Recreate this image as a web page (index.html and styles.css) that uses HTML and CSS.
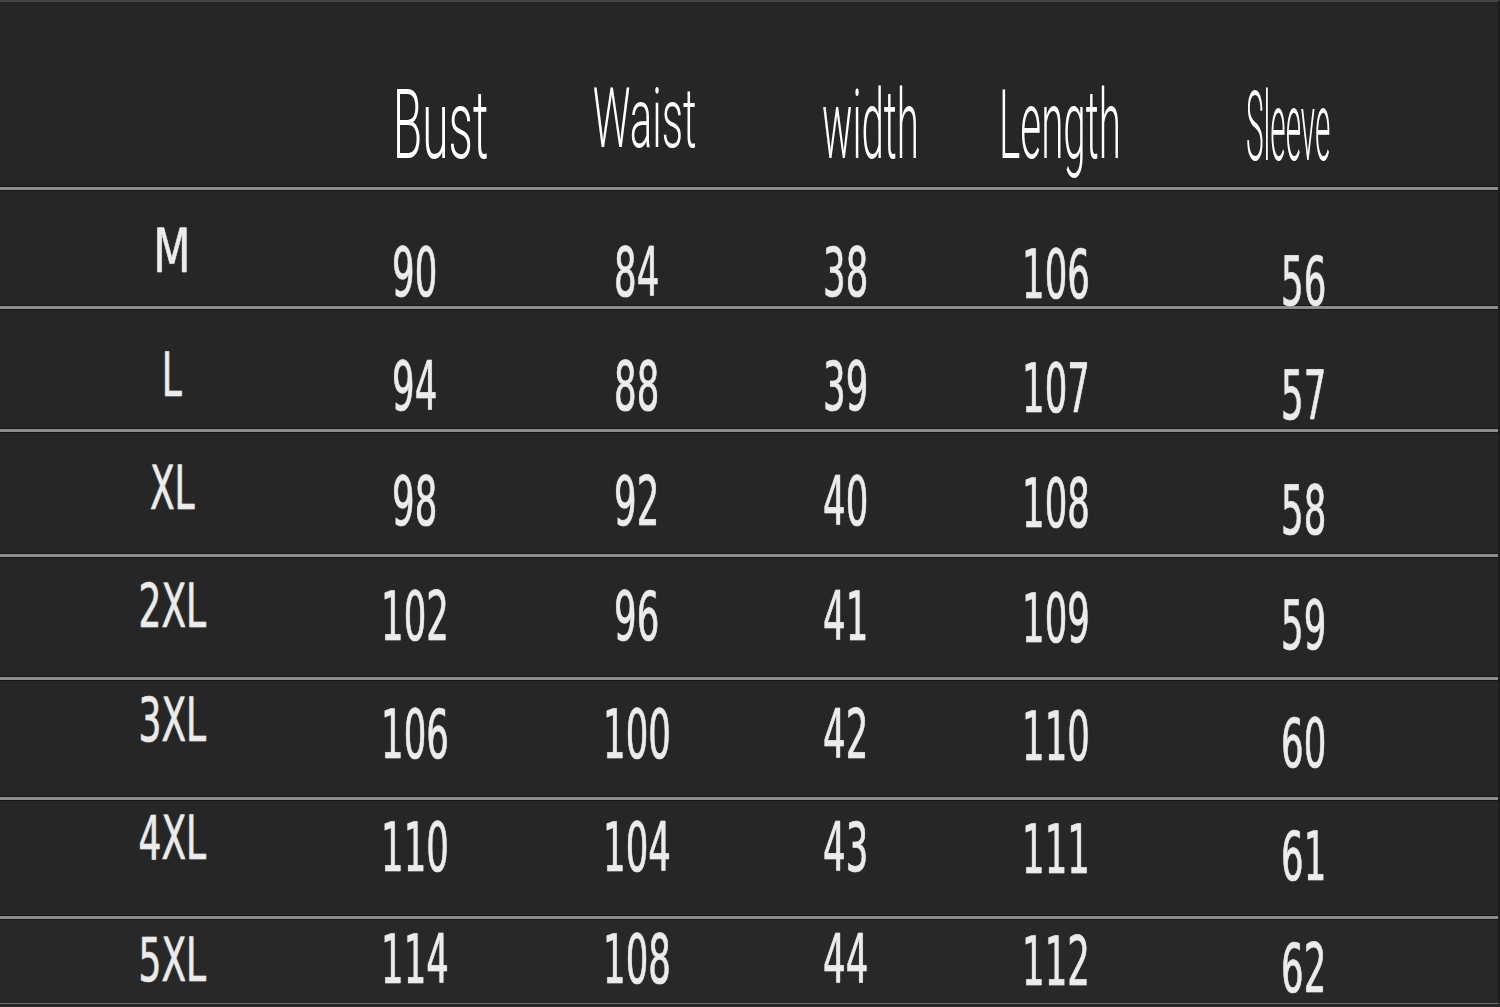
FILE: index.html
```html
<!DOCTYPE html>
<html lang="en">
<head>
<meta charset="utf-8">
<title>Size chart</title>
<link rel="stylesheet" href="styles.css">
</head>
<body>
<div class="chart">
  <div class="row head">
    <div class="cell"></div>
    <div class="cell"><span class="h h-bust">Bust</span></div>
    <div class="cell"><span class="h h-waist">Waist</span></div>
    <div class="cell"><span class="h h-width">width</span></div>
    <div class="cell"><span class="h h-length">Length</span></div>
    <div class="cell"><span class="h h-sleeve">Sleeve</span></div>
  </div>
  <div class="row r1">
    <div class="cell lab"><span class="l l-m">M</span></div>
    <div class="cell"><span class="n">90</span></div>
    <div class="cell"><span class="n">84</span></div>
    <div class="cell"><span class="n">38</span></div>
    <div class="cell len"><span class="n">106</span></div>
    <div class="cell slv"><span class="n">56</span></div>
  </div>
  <div class="row r2">
    <div class="cell lab"><span class="l">L</span></div>
    <div class="cell"><span class="n">94</span></div>
    <div class="cell"><span class="n">88</span></div>
    <div class="cell"><span class="n">39</span></div>
    <div class="cell len"><span class="n">107</span></div>
    <div class="cell slv"><span class="n">57</span></div>
  </div>
  <div class="row r3">
    <div class="cell lab"><span class="l">XL</span></div>
    <div class="cell"><span class="n">98</span></div>
    <div class="cell"><span class="n">92</span></div>
    <div class="cell"><span class="n">40</span></div>
    <div class="cell len"><span class="n">108</span></div>
    <div class="cell slv"><span class="n">58</span></div>
  </div>
  <div class="row r4">
    <div class="cell lab"><span class="l">2XL</span></div>
    <div class="cell"><span class="n">102</span></div>
    <div class="cell"><span class="n">96</span></div>
    <div class="cell"><span class="n">41</span></div>
    <div class="cell len"><span class="n">109</span></div>
    <div class="cell slv"><span class="n">59</span></div>
  </div>
  <div class="row r5">
    <div class="cell lab"><span class="l">3XL</span></div>
    <div class="cell"><span class="n">106</span></div>
    <div class="cell"><span class="n">100</span></div>
    <div class="cell"><span class="n">42</span></div>
    <div class="cell len"><span class="n">110</span></div>
    <div class="cell slv"><span class="n">60</span></div>
  </div>
  <div class="row r6">
    <div class="cell lab"><span class="l">4XL</span></div>
    <div class="cell"><span class="n">110</span></div>
    <div class="cell"><span class="n">104</span></div>
    <div class="cell"><span class="n">43</span></div>
    <div class="cell len"><span class="n">111</span></div>
    <div class="cell slv"><span class="n">61</span></div>
  </div>
  <div class="row r7">
    <div class="cell lab"><span class="l">5XL</span></div>
    <div class="cell"><span class="n">114</span></div>
    <div class="cell"><span class="n">108</span></div>
    <div class="cell"><span class="n">44</span></div>
    <div class="cell len"><span class="n">112</span></div>
    <div class="cell slv"><span class="n">62</span></div>
  </div>
</div>
</body>
</html>
```
FILE: styles.css
```css
html, body {
  margin: 0;
  padding: 0;
  background: #262626;
}

.chart {
  width: 1500px;
  box-sizing: border-box;
  background: #262626;
  border-top: 2px solid #464646;
  border-right: 2px solid #1c1c1c;
  border-bottom: 1px solid #6e6e6e;
}

.row {
  display: grid;
  grid-template-columns: 344px 142px 302px 116px 304px 192px 1fr;
  box-sizing: border-box;
  border-top: 3px solid #8c8c8c;
  box-shadow: 0 -1px 0 #171717, inset 0 1px 0 #171717;
}

.row.head {
  grid-template-columns: 344px 194px 214px 236px 144px 312px 1fr;
  height: 185px;
  border-top: 0;
  box-shadow: none;
  padding-top: 75px;
}

.cell {
  display: flex;
  justify-content: center;
  align-items: flex-start;
  padding-top: var(--num);
  min-width: 0;
}

.row.head .cell { padding-top: 0; }

.cell.lab { padding-top: var(--lab); }
.cell.len { padding-top: calc(var(--num) + 2px); }
.cell.slv { padding-top: calc(var(--num) + 9px); }

.h, .n, .l {
  display: inline-block;
  white-space: nowrap;
  line-height: 1;
  transform-origin: center top;
}

.h {
  font-family: Roboto, "Liberation Sans", sans-serif;
  font-weight: 300;
  font-size: 96px;
  color: #ffffff;
  transform: scaleX(var(--sx, 0.45));
}
.h-bust { --sx: 0.5; }
.h-waist { font-size: 84px; --sx: 0.5; }
.h-width { --sx: 0.42; }
.h-length { --sx: 0.42; }
.h-sleeve { --sx: 0.31; margin-top: 2px; }

.n {
  font-family: "DejaVu Sans", sans-serif;
  font-size: 67px;
  color: #ececec;
  transform: scaleX(0.53);
  -webkit-text-stroke: 0.7px #e6e6e6;
  text-shadow: 0 0 2px rgba(140, 140, 140, 0.8);
}

.l {
  font-family: "DejaVu Sans", sans-serif;
  font-size: 60px;
  color: #ececec;
  transform: scaleX(0.6);
  -webkit-text-stroke: 0.6px #e6e6e6;
  text-shadow: 0 0 2px rgba(140, 140, 140, 0.8);
}
.l-m { transform: scaleX(0.72); }

.r1 { height: 119px; --num: 50px; --lab: 31px; }
.r2 { height: 123px; --num: 45px; --lab: 36px; }
.r3 { height: 125px; --num: 37px; --lab: 26px; }
.r4 { height: 123px; --num: 27px; --lab: 19px; }
.r5 { height: 120px; --num: 22px; --lab: 10px; }
.r6 { height: 119px; --num: 15px; --lab: 8px; }
.r7 { height: 87px; --num: 8px; --lab: 11px; background: #282828; }
```
